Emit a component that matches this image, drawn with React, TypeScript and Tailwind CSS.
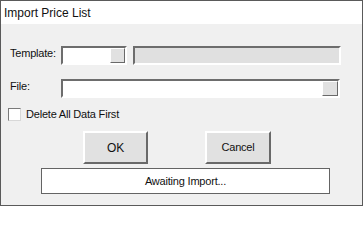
import React from "react";

function Sunken({ className, children }: { className: string; children?: React.ReactNode }) {
  return (
    <div className={"border-2 border-t-[#6d6d6d] border-l-[#6d6d6d] border-b-white border-r-white " + className}>
      {children}
    </div>
  );
}

function Raised({ className, children }: { className: string; children?: React.ReactNode }) {
  return (
    <div className={"border-2 border-t-white border-l-white border-b-[#696969] border-r-[#696969] bg-[#e1e1e1] " + className}>
      {children}
    </div>
  );
}

export default function App() {
  return (
    <div
      className="w-[363px] h-[206px] border border-[#5a5a5a] bg-[#f0f0f0] flex flex-col overflow-hidden text-[#111]"
      style={{ fontFamily: '"Liberation Sans", Arial, sans-serif' }}
    >
      <div className="h-[23px] bg-white flex items-center pl-[3px] text-[12px] leading-none pt-[1px]">
        Import Price List
      </div>
      <div className="flex flex-col pl-[7px] text-[11px] leading-none tracking-[-0.2px]">
        <div className="flex items-center h-[19px] mt-[22px]">
          <div className="w-[53px] pl-[2px] -mt-[4px]">Template:</div>
          <Sunken className="w-[66px] h-[19px] bg-white flex justify-end items-stretch">
            <Raised className="w-[15px] h-[15px] !border-[1px]" />
          </Sunken>
          <Sunken className="ml-[6px] w-[208px] h-[19px] bg-[#e0e0e0]" />
        </div>
        <div className="flex items-center h-[19px] mt-[14px]">
          <div className="w-[53px] pl-[2px] -mt-[4px]">File:</div>
          <Sunken className="w-[279px] h-[19px] bg-white flex justify-end">
            <Raised className="w-[16px] h-[15px] !border-[1px]" />
          </Sunken>
        </div>
        <div className="flex items-center h-[13px] mt-[10px]">
          <div className="w-[13px] h-[13px] bg-white border border-t-[#7a7a7a] border-l-[#7a7a7a] border-b-[#d8d8d8] border-r-[#d8d8d8]" />
          <div className="ml-[5px] -mt-[1px]">Delete All Data First</div>
        </div>
        <div className="flex h-[33px] mt-[10px]">
          <Raised className="ml-[75px] w-[65px] h-[33px] flex items-center justify-center text-[12px]">
            OK
          </Raised>
          <Raised className="ml-[57px] w-[66px] h-[33px] flex items-center justify-center">
            Cancel
          </Raised>
        </div>
        <div className="ml-[33px] mt-[4px] w-[289px] h-[26px] bg-white border border-[#646464] flex items-center justify-center">
          Awaiting Import...
        </div>
      </div>
    </div>
  );
}
